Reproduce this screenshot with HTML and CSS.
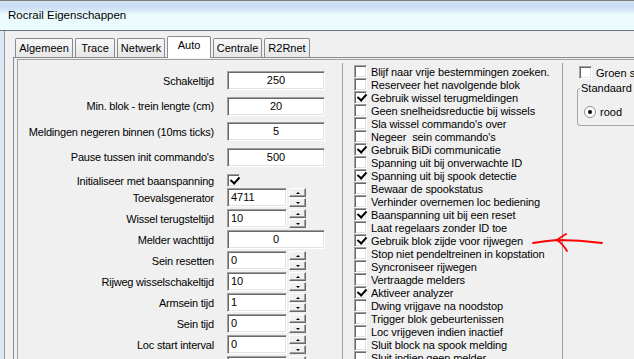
FILE: index.html
```html
<!DOCTYPE html>
<html lang="nl">
<head>
    <meta charset="UTF-8">
    <meta name="viewport" content="width=device-width, initial-scale=1.0">
    <title>Rocrail Eigenschappen</title>
    <link rel="stylesheet" href="styles.css">
</head>
<body>
    <div class="titlebar">Rocrail Eigenschappen</div>

    <div class="frame">
        <div class="frame-edge"></div>
        <div class="client">
            <div class="tabs">
                <div class="tab w-algemeen">Algemeen</div>
                <div class="tab w-trace">Trace</div>
                <div class="tab w-netwerk">Netwerk</div>
                <div class="tab w-auto active">Auto</div>
                <div class="tab w-centrale">Centrale</div>
                <div class="tab w-r2rnet">R2Rnet</div>
            </div>

            <div class="page">
                <div class="scroll">
                    <!-- left: numeric settings -->
                    <div class="col-left">
                        <div class="field spaced">
                            <span class="lbl">Schakeltijd</span>
                            <div class="input center">250</div>
                        </div>
                        <div class="field spaced">
                            <span class="lbl">Min. blok - trein lengte (cm)</span>
                            <div class="input center">20</div>
                        </div>
                        <div class="field spaced">
                            <span class="lbl">Meldingen negeren binnen (10ms ticks)</span>
                            <div class="input center">5</div>
                        </div>
                        <div class="field spaced-last">
                            <span class="lbl">Pause tussen init commando's</span>
                            <div class="input center">500</div>
                        </div>
                        <div class="field flag">
                            <span class="lbl">Initialiseer met baanspanning</span>
                            <span class="box on"></span>
                        </div>
                        <div class="field tight">
                            <span class="lbl">Toevalsgenerator</span>
                            <div class="input short">4711</div>
                            <div class="spin"><span class="spin-btn up"></span><span class="spin-btn down"></span></div>
                        </div>
                        <div class="field tight">
                            <span class="lbl">Wissel terugsteltijd</span>
                            <div class="input short">10</div>
                            <div class="spin"><span class="spin-btn up"></span><span class="spin-btn down"></span></div>
                        </div>
                        <div class="field tight">
                            <span class="lbl">Melder wachttijd</span>
                            <div class="input center">0</div>
                        </div>
                        <div class="field tight">
                            <span class="lbl">Sein resetten</span>
                            <div class="input short">0</div>
                            <div class="spin"><span class="spin-btn up"></span><span class="spin-btn down"></span></div>
                        </div>
                        <div class="field tight">
                            <span class="lbl">Rijweg wisselschakeltijd</span>
                            <div class="input short">10</div>
                            <div class="spin"><span class="spin-btn up"></span><span class="spin-btn down"></span></div>
                        </div>
                        <div class="field tight">
                            <span class="lbl">Armsein tijd</span>
                            <div class="input short">1</div>
                            <div class="spin"><span class="spin-btn up"></span><span class="spin-btn down"></span></div>
                        </div>
                        <div class="field tight">
                            <span class="lbl">Sein tijd</span>
                            <div class="input short">0</div>
                            <div class="spin"><span class="spin-btn up"></span><span class="spin-btn down"></span></div>
                        </div>
                        <div class="field tight">
                            <span class="lbl">Loc start interval</span>
                            <div class="input short">0</div>
                            <div class="spin"><span class="spin-btn up"></span><span class="spin-btn down"></span></div>
                        </div>
                        <div class="field tight">
                            <span class="lbl"></span>
                            <div class="input short"></div>
                            <div class="spin"><span class="spin-btn up"></span><span class="spin-btn down"></span></div>
                        </div>
                    </div>

                    <!-- middle: option checkboxes -->
                    <div class="col-mid">
                        <div class="opt"><span class="box"></span>Blijf naar vrije bestemmingen zoeken.</div>
                        <div class="opt"><span class="box"></span>Reserveer het navolgende blok</div>
                        <div class="opt"><span class="box on"></span>Gebruik wissel terugmeldingen</div>
                        <div class="opt"><span class="box"></span>Geen snelheidsreductie bij wissels</div>
                        <div class="opt"><span class="box"></span>Sla wissel commando's over</div>
                        <div class="opt"><span class="box"></span>Negeer&nbsp; sein commando's</div>
                        <div class="opt"><span class="box on"></span>Gebruik BiDi communicatie</div>
                        <div class="opt"><span class="box"></span>Spanning uit bij onverwachte ID</div>
                        <div class="opt"><span class="box on"></span>Spanning uit bij spook detectie</div>
                        <div class="opt"><span class="box"></span>Bewaar de spookstatus</div>
                        <div class="opt"><span class="box"></span>Verhinder overnemen loc bediening</div>
                        <div class="opt"><span class="box on"></span>Baanspanning uit bij een reset</div>
                        <div class="opt"><span class="box"></span>Laat regelaars zonder ID toe</div>
                        <div class="opt"><span class="box on"></span>Gebruik blok zijde voor rijwegen</div>
                        <div class="opt"><span class="box"></span>Stop niet pendeltreinen in kopstation</div>
                        <div class="opt"><span class="box"></span>Syncroniseer rijwegen</div>
                        <div class="opt"><span class="box"></span>Vertraagde melders</div>
                        <div class="opt"><span class="box on"></span>Aktiveer analyzer</div>
                        <div class="opt"><span class="box"></span>Dwing vrijgave na noodstop</div>
                        <div class="opt"><span class="box"></span>Trigger blok gebeurtenissen</div>
                        <div class="opt"><span class="box"></span>Loc vrijgeven indien inactief</div>
                        <div class="opt"><span class="box"></span>Sluit block na spook melding</div>
                        <div class="opt"><span class="box"></span>Sluit indien geen melder</div>
                    </div>

                    <!-- right: signal defaults -->
                    <div class="col-right">
                        <div class="opt"><span class="box"></span>Groen sein</div>
                        <fieldset class="group">
                            <legend>Standaard sein</legend>
                            <div class="radio-row"><span class="radio"></span>rood</div>
                        </fieldset>
                    </div>
                </div>
            </div>
        </div>
    </div>

    <!-- hand drawn marker over the screenshot -->
    <svg class="marker" width="634" height="359" viewBox="0 0 634 359">
        <path d="M533 243 Q545 241 557 240 Q580 240 602 243" />
        <path d="M557 240 Q561 237 566 234" />
        <path d="M557 240 Q563 244 567 251" />
    </svg>
</body>
</html>
```

FILE: styles.css
```css
* {
    margin: 0;
    padding: 0;
    box-sizing: border-box;
}

html, body {
    width: 634px;
    height: 359px;
    overflow: hidden;
}

body {
    position: relative;
    background-color: #f0f0f0;
    font-family: "Liberation Sans", Arial, sans-serif;
    font-size: 11px;
    color: #000;
}

.titlebar {
    height: 31px;
    padding-left: 8px;
    line-height: 30px;
    font-size: 11.5px;
    border-bottom: 1px solid #6b7680;
    background: linear-gradient(to bottom, #7d7d7d 0, #7d7d7d 1px, #d6e2ee 1px, #c8dbf1 5px, #d4e6f6 10px, #eafafd 14px, #ecfcfd 30px);
}

.frame {
    display: flex;
    height: 328px;
}

.frame-edge {
    flex: none;
    width: 5px;
    background-color: #dbe7f3;
    border-right: 1px solid #8b98a5;
}

.client {
    flex: 1;
    min-width: 0;
    display: flex;
    flex-direction: column;
    padding: 5px 0 0 8px;
}

/* tabs */
.tabs {
    position: relative;
    z-index: 1;
    display: flex;
    align-items: flex-end;
    gap: 2px;
    height: 21px;
    padding-left: 2px;
}

.tab {
    flex: none;
    height: 19px;
    line-height: 18px;
    text-align: center;
    white-space: nowrap;
    border: 1px solid #898c95;
    border-bottom: none;
    border-radius: 2px 2px 0 0;
    background: linear-gradient(to bottom, #f8f8f8, #e6e6e6);
}

.tab.active {
    height: 22px;
    line-height: 17px;
    margin-bottom: -1px;
    background: #fff;
}

.w-algemeen { width: 58px; }
.w-trace { width: 40px; }
.w-netwerk { width: 48px; }
.w-auto { width: 44px; }
.w-centrale { width: 49px; }
.w-r2rnet { width: 46px; }

.page {
    flex: 1;
    padding: 1px 0 0 3px;
    border-top: 1px solid #898c95;
    border-left: 1px solid #898c95;
}

.scroll {
    display: flex;
    height: 100%;
    border-top: 1px solid #a0a0a0;
    border-left: 1px solid #a0a0a0;
}

/* left column */
.col-left {
    width: 324px;
    flex: none;
    padding-top: 11px;
}

.field {
    display: flex;
    align-items: center;
    height: 19px;
}

.field .lbl {
    width: 196px;
    margin-right: 13px;
    text-align: right;
    white-space: nowrap;
    letter-spacing: -0.2px;
}

.spaced { margin-bottom: 6.5px; }
.spaced-last { margin-bottom: 7.5px; }
.tight { margin-bottom: 2px; }

.field.flag {
    height: 13px;
    margin-bottom: 1px;
}

.input {
    flex: none;
    width: 98px;
    height: 19px;
    padding: 0 3px;
    line-height: 17px;
    white-space: nowrap;
    background-color: #fff;
    border: 1px solid;
    border-color: #a0a0a0 #fff #fff #a0a0a0;
    box-shadow: inset 1px 1px #696969, inset -1px -1px #e3e3e3;
}

.input.center { text-align: center; }
.input.short { width: 60px; }

.spin {
    flex: none;
    display: flex;
    flex-direction: column;
    justify-content: space-between;
    width: 17px;
    height: 19px;
    margin-left: 2px;
}

.spin-btn {
    display: flex;
    align-items: center;
    justify-content: center;
    height: 9px;
    background-color: #f0f0f0;
    border: 1px solid;
    border-color: #fff #696969 #696969 #fff;
    box-shadow: inset -1px -1px #a0a0a0;
}

.spin-btn::after {
    content: "";
    border-left: 2px solid transparent;
    border-right: 2px solid transparent;
}

.spin-btn.up::after { border-bottom: 2px solid #000; }
.spin-btn.down::after { border-top: 2px solid #000; }

/* checkboxes */
.box {
    flex: none;
    width: 13px;
    height: 13px;
    background-color: #fff;
    border: 1px solid;
    border-color: #a0a0a0 #fff #fff #a0a0a0;
    box-shadow: inset 1px 1px #696969, inset -1px -1px #e3e3e3;
}

.box.on::after {
    content: "";
    display: block;
    width: 4px;
    height: 7px;
    margin: 0 0 0 4px;
    border: solid #000;
    border-width: 0 2px 2px 0;
    transform: rotate(42deg);
}

.col-mid {
    width: 220px;
    flex: none;
    margin-top: 3px;
    padding: 2px 0 0 11px;
    border-left: 1px solid #a0a0a0;
    letter-spacing: -0.12px;
}

.opt {
    display: flex;
    align-items: center;
    height: 13px;
    white-space: nowrap;
}

.opt .box {
    margin-right: 4px;
}

/* right column */
.col-right {
    flex: 1;
    min-width: 0;
    margin-top: 3px;
    padding: 3px 0 0 16px;
    border-left: 1px solid #a0a0a0;
}

.group {
    width: 120px;
    margin: 3px 0 0 -2px;
    padding: 0 0 7px 2px;
    border: 1px solid #a5a5a5;
    border-radius: 3px;
}

.group legend {
    padding: 0 1px;
    line-height: 13px;
    white-space: nowrap;
}

.radio-row {
    display: flex;
    align-items: center;
    height: 13px;
    margin-top: 10px;
    padding-left: 4px;
}

.radio {
    display: flex;
    align-items: center;
    justify-content: center;
    width: 12px;
    height: 12px;
    margin-right: 4px;
    border-radius: 50%;
    border: 1px solid #8f8f8f;
    background-color: #fff;
}

.radio::after {
    content: "";
    width: 4px;
    height: 4px;
    border-radius: 50%;
    background-color: #000;
}

.marker {
    position: absolute;
    left: 0;
    top: 0;
    pointer-events: none;
}

.marker path {
    fill: none;
    stroke: #f00;
    stroke-width: 1.8;
    stroke-linecap: round;
}
```
